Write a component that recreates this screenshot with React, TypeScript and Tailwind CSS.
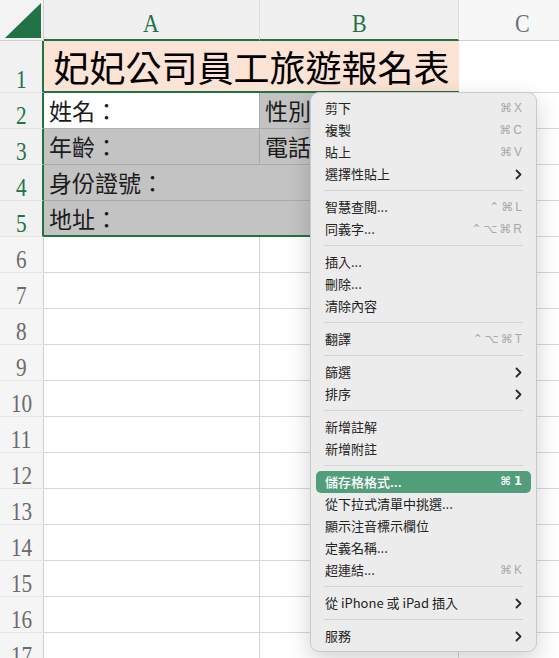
import React from 'react';

/* ── Spreadsheet data ─────────────────────────────────────────────── */
type MenuItem = { label: string; shortcut?: string; sub?: boolean; active?: boolean };

const MENU: (MenuItem | null)[] = [
  { label: '剪下', shortcut: '⌘X' },
  { label: '複製', shortcut: '⌘C' },
  { label: '貼上', shortcut: '⌘V' },
  { label: '選擇性貼上', sub: true },
  null,
  { label: '智慧查閱...', shortcut: '⌃⌘L' },
  { label: '同義字...', shortcut: '⌃⌥⌘R' },
  null,
  { label: '插入...' },
  { label: '刪除...' },
  { label: '清除內容' },
  null,
  { label: '翻譯', shortcut: '⌃⌥⌘T' },
  null,
  { label: '篩選', sub: true },
  { label: '排序', sub: true },
  null,
  { label: '新增註解' },
  { label: '新增附註' },
  null,
  { label: '儲存格格式...', shortcut: '⌘1', active: true },
  { label: '從下拉式清單中挑選...' },
  { label: '顯示注音標示欄位' },
  { label: '定義名稱...' },
  { label: '超連結...', shortcut: '⌘K' },
  null,
  { label: '從 iPhone 或 iPad 插入', sub: true },
  null,
  { label: '服務', sub: true },
];

const EMPTY_ROWS = [6, 7, 8, 9, 10, 11, 12, 13, 14, 15, 16, 17];

function RowHead({ n, selected }: { n: number; selected?: boolean }) {
  return (
    <div
      className={
        selected
          ? 'flex w-[44px] shrink-0 items-end justify-center border-r-2 border-b border-r-[#217346] border-b-[#e2e2e2] bg-[#f1f1f1] text-[#217346]'
          : 'flex w-[44px] shrink-0 items-end justify-center border-r border-b border-r-[#d0d0d0] border-b-[#e6e6e6] bg-[#f5f5f5] text-[#6b6b6b]'
      }
    >
      <span className="inline-block scale-x-[0.85] font-['Liberation_Serif',serif] text-[25px] leading-none">
        {n}
      </span>
    </div>
  );
}

function Chevron() {
  return (
    <svg width="7" height="11" viewBox="0 0 7 11" aria-hidden="true">
      <polyline
        points="1.5,1.5 5.5,5.5 1.5,9.5"
        fill="none"
        stroke="#2b2b2b"
        strokeWidth="1.8"
        strokeLinecap="round"
        strokeLinejoin="round"
      />
    </svg>
  );
}

function ContextMenu() {
  return (
    <div className="absolute left-[310px] top-[92px] w-[227px] rounded-[9px] border border-[#c9c9c9] bg-[#ececec] py-[4px] shadow-[0_8px_24px_rgba(0,0,0,0.18)]">
      {MENU.map((item, i) =>
        item === null ? (
          <div key={i} className="flex h-[11px] items-center px-[13px]">
            <div className="h-px w-full bg-[#d3d3d3]" />
          </div>
        ) : (
          <div
            key={i}
            className={
              item.active
                ? 'mx-[5px] flex h-[22px] items-center justify-between rounded-[5px] bg-[#529e7b] px-[9px] text-white'
                : 'mx-[5px] flex h-[22px] items-center justify-between rounded-[5px] px-[9px] text-[#232323]'
            }
          >
            <span className={item.active ? 'text-[13px] font-medium' : 'text-[13px]'}>{item.label}</span>
            {item.shortcut && (
              <span
                className={
                  item.active
                    ? "flex gap-[3px] font-['DejaVu_Sans',sans-serif] text-[11.5px] font-bold text-white"
                    : "flex gap-[2px] font-['Liberation_Sans','DejaVu_Sans',sans-serif] text-[12px] text-[#a8a8a8]"
                }
              >
                {item.shortcut.split('').map((c, j) => (
                  <span key={j}>{c}</span>
                ))}
              </span>
            )}
            {item.sub && <Chevron />}
          </div>
        ),
      )}
    </div>
  );
}

export default function App() {
  return (
    <div className="relative h-[658px] w-[559px] overflow-hidden bg-white font-['Noto_Sans_CJK_TC',sans-serif]">
      {/* ── Column headers ───────────────────────────────────────── */}
      <div className="flex h-[41px]">
        <div className="relative w-[44px] shrink-0 border-r border-b border-[#d0d0d0] bg-[#f3f3f3]">
          <svg className="absolute left-0 top-0" width="43" height="40" aria-hidden="true">
            <polygon points="5,38 41,38 41,3" fill="#217346" />
          </svg>
        </div>
        <div className="flex w-[216px] shrink-0 items-end justify-center border-r border-b-2 border-r-[#dcdcdc] border-b-[#217346] bg-[#f0f0f0] pb-[3px] text-[#217346]">
          <span className="inline-block scale-x-[0.88] font-['Liberation_Serif',serif] text-[25px] leading-none">A</span>
        </div>
        <div className="flex w-[199px] shrink-0 items-end justify-center border-r border-b-2 border-r-[#dcdcdc] border-b-[#217346] bg-[#f0f0f0] pb-[3px] text-[#217346]">
          <span className="inline-block scale-x-[0.88] font-['Liberation_Serif',serif] text-[25px] leading-none">B</span>
        </div>
        <div className="flex flex-1 items-end justify-center border-b border-b-[#cfcfcf] bg-[#f7f7f7] pb-[4px] pl-[26px] text-[#707070]">
          <span className="inline-block scale-x-[0.88] font-['Liberation_Serif',serif] text-[25px] leading-none">C</span>
        </div>
      </div>

      {/* ── Row 1: title ─────────────────────────────────────────── */}
      <div className="flex h-[52px]">
        <RowHead n={1} selected />
        <div className="flex w-[415px] shrink-0 items-center justify-center border-b-2 border-b-[#217346] bg-[#fbe3d6] text-[36px] leading-none text-black">
          妃妃公司員工旅遊報名表
        </div>
        <div className="flex-1 border-b border-[#d6d6d6]" />
      </div>

      {/* ── Row 2 ────────────────────────────────────────────────── */}
      <div className="flex h-[36px] text-[23px] text-[#1c1c1c]">
        <RowHead n={2} selected />
        <div className="flex w-[216px] shrink-0 items-center border-r border-b border-r-[#a9a9a9] border-b-[#b0b0b0] bg-white px-[5px]">
          姓名：
        </div>
        <div className="flex w-[199px] shrink-0 items-center border-r border-b border-[#a9a9a9] bg-[#c3c3c3] px-[5px]">
          性別：
        </div>
        <div className="flex-1 border-b border-[#d6d6d6]" />
      </div>

      {/* ── Row 3 ────────────────────────────────────────────────── */}
      <div className="flex h-[36px] text-[23px] text-[#1c1c1c]">
        <RowHead n={3} selected />
        <div className="flex w-[216px] shrink-0 items-center border-r border-b border-[#a9a9a9] bg-[#c3c3c3] px-[5px]">
          年齡：
        </div>
        <div className="flex w-[199px] shrink-0 items-center border-r border-b border-[#a9a9a9] bg-[#c3c3c3] px-[5px]">
          電話：
        </div>
        <div className="flex-1 border-b border-[#d6d6d6]" />
      </div>

      {/* ── Row 4 ────────────────────────────────────────────────── */}
      <div className="flex h-[36px] text-[23px] text-[#1c1c1c]">
        <RowHead n={4} selected />
        <div className="flex w-[415px] shrink-0 items-center border-r border-b border-[#a9a9a9] bg-[#c3c3c3] px-[5px]">
          身份證號：
        </div>
        <div className="flex-1 border-b border-[#d6d6d6]" />
      </div>

      {/* ── Row 5 ────────────────────────────────────────────────── */}
      <div className="flex h-[36px] text-[23px] text-[#1c1c1c]">
        <RowHead n={5} selected />
        <div className="flex w-[415px] shrink-0 items-center border-r border-b-2 border-r-[#a9a9a9] border-b-[#217346] bg-[#c3c3c3] px-[5px]">
          地址：
        </div>
        <div className="flex-1 border-b border-[#d6d6d6]" />
      </div>

      {/* ── Empty rows ───────────────────────────────────────────── */}
      {EMPTY_ROWS.map((n) => (
        <div key={n} className="flex h-[36px]">
          <RowHead n={n} />
          <div className="w-[216px] shrink-0 border-r border-b border-[#d6d6d6]" />
          <div className="w-[199px] shrink-0 border-r border-b border-[#d6d6d6]" />
          <div className="flex-1 border-b border-[#d6d6d6]" />
        </div>
      ))}

      <ContextMenu />
    </div>
  );
}
